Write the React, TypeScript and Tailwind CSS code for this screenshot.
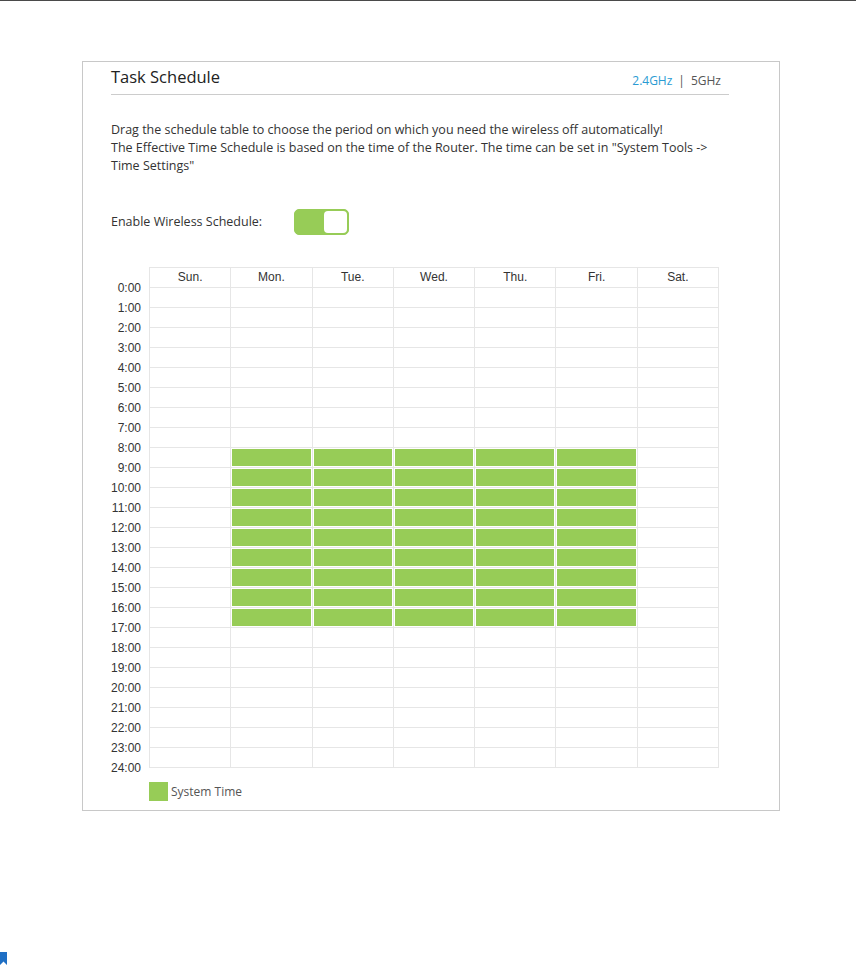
import React from 'react';

const days = ['Sun.', 'Mon.', 'Tue.', 'Wed.', 'Thu.', 'Fri.', 'Sat.'];
const hours = Array.from({ length: 25 }, (_, i) => `${i}:00`);

// wireless off Mon-Fri, 8:00 - 17:00
const isOff = (day: number, hour: number) => day >= 1 && day <= 5 && hour >= 8 && hour < 17;

const ScheduleGrid = () => (
    <div className="flex">
        <div className="w-[38px] pr-[8px] pt-[11px] text-right text-[12px] text-[#333]">
            {hours.map((h) => (
                <div key={h} className="flex h-[20px] items-center justify-end">
                    {h}
                </div>
            ))}
        </div>
        <div className="h-[501px] w-[570px] border-l border-t border-[#e6e6e6]">
            <div className="grid grid-cols-7">
                {days.map((d) => (
                    <div
                        key={d}
                        className="flex h-[20px] items-center justify-center border-b border-r border-[#e6e6e6] pb-[1px] text-[12px] text-[#333]"
                    >
                        {d}
                    </div>
                ))}
                {Array.from({ length: 24 }).map((_, hour) =>
                    days.map((d, day) => (
                        <div key={`${hour}-${d}`} className="h-[20px] border-b border-r border-[#e6e6e6] p-[1px]">
                            {isOff(day, hour) && <div className="h-full w-full bg-[#97cc57]" />}
                        </div>
                    ))
                )}
            </div>
        </div>
    </div>
);

const App = () => {
    return (
        <div
            className="relative min-h-[965px] border-t border-[#4a4a4a] bg-white"
            style={{ fontFamily: '"Liberation Sans", Arial, sans-serif' }}
        >
            <div className="ml-[82px] mt-[60px] h-[750px] w-[698px] border border-[#c8c8c8] pl-[28px] pr-[50px]">
                <div className="flex h-[33px] items-end justify-between border-b border-[#cccccc] pb-[4px]">
                    <span className="text-[16.5px] text-[#222]" style={{ fontFamily: '"Open Sans", sans-serif' }}>
                        Task Schedule
                    </span>
                    <span className="mr-[8px] text-[12px] text-[#555]" style={{ fontFamily: '"Open Sans", sans-serif' }}>
                        <span className="text-[#2a9bd3]">2.4GHz</span>
                        <span className="mx-[6px]">|</span>
                        <span>5GHz</span>
                    </span>
                </div>

                <p
                    className="mt-[26px] w-[602px] text-[12.5px] leading-[18px] text-[#333]"
                    style={{ fontFamily: '"Open Sans", sans-serif' }}
                >
                    Drag the schedule table to choose the period on which you need the wireless off automatically!
                    <br />
                    The Effective Time Schedule is based on the time of the Router. The time can be set in "System Tools -&gt; Time Settings"
                </p>

                <div className="mt-[34px] flex items-center">
                    <span className="w-[183px] text-[12.5px] text-[#333]" style={{ fontFamily: '"Open Sans", sans-serif' }}>
                        Enable Wireless Schedule:
                    </span>
                    <div className="flex h-[26px] w-[55px] rounded-[5px] border border-[#97cc57] bg-[#97cc57] p-[1px]">
                        <div className="ml-auto h-full w-[23px] rounded-[4px] bg-white" />
                    </div>
                </div>

                <div className="mt-[32px]">
                    <ScheduleGrid />
                </div>

                <div className="ml-[38px] mt-[3px] flex items-center gap-[3px]">
                    <div className="h-[19px] w-[19px] bg-[#97cc57]" />
                    <span className="pt-[2px] text-[12px] text-[#555]" style={{ fontFamily: '"Open Sans", sans-serif' }}>
                        System Time
                    </span>
                </div>
            </div>

            {/* back-to-top tab */}
            <svg className="absolute bottom-0 left-0" width="7" height="13" viewBox="0 0 7 13">
                <path d="M0 0H7V13L3.5 9.5L0 13Z" fill="#1f6fc4" />
            </svg>
        </div>
    );
};

export default App;
